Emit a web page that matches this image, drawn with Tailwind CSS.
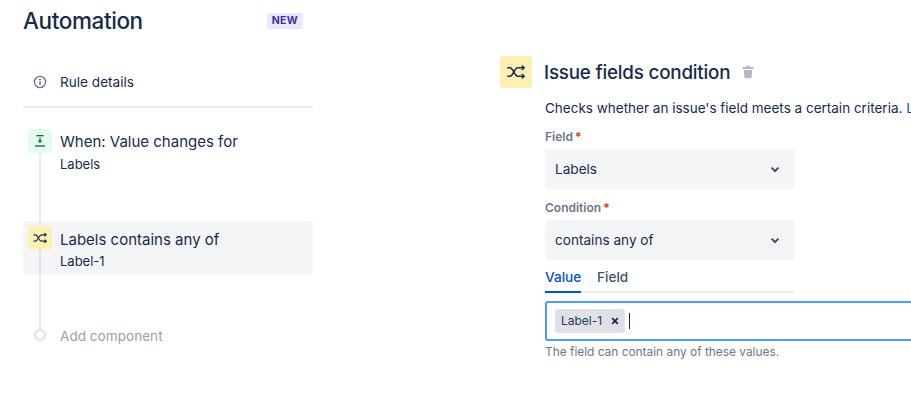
<!DOCTYPE html>
<html lang="en">
<head>
  <meta charset="UTF-8">
  <title>Automation</title>
  <script src="https://cdn.jsdelivr.net/npm/@tailwindcss/browser@4"></script>
</head>
<body class="bg-white h-[400px] w-[911px] overflow-hidden font-['Inter',sans-serif] text-[#172b4d]">
  <div class="flex h-[400px]">
    <!-- sidebar -->
    <aside class="w-[290px] ml-[23px] shrink-0">
      <div class="flex items-center justify-between h-[42px] pr-[10px]">
        <h1 class="text-[22.5px] leading-[42px] font-medium tracking-[-0.4px]">Automation</h1>
        <span class="bg-[#eae6ff] text-[#403294] text-[10.5px] leading-[16px] font-bold px-[5px] rounded-[3px] tracking-[0.3px]">NEW</span>
      </div>
      <div class="flex items-center h-[66px] border-b-2 border-[#ebecf0] pl-[9px] pt-[18px] pb-[2px]">
        <svg class="w-[16px] h-[16px] mr-[12px]" viewBox="0 0 16 16" fill="none">
          <circle cx="8" cy="8" r="5.6" stroke="#6b778c" stroke-width="1.4"/>
          <rect x="7.2" y="7.2" width="1.6" height="3.8" fill="#6b778c"/>
          <circle cx="8" cy="5.4" r="0.95" fill="#6b778c"/>
        </svg>
        <span class="text-[13.6px]">Rule details</span>
      </div>
      <div class="relative">
        <div class="absolute left-[16px] top-[45px] w-[2px] h-[177px] bg-[#ebecf0]"></div>
        <div class="relative flex pl-[5px] pt-[21px] h-[113px]">
          <div class="w-[24px] h-[24px] rounded-[3px] bg-[#e3fcef] flex items-center justify-center mr-[8px] shrink-0">
            <svg class="w-[14px] h-[14px]" viewBox="0 0 14 14" fill="#006644">
              <rect x="3.5" y="1" width="7" height="1.3"/>
              <rect x="6.4" y="3.6" width="1.2" height="3"/>
              <path d="M4.6 6.4h4.8L7 9.2z"/>
              <rect x="2" y="11.4" width="10" height="1.3"/>
            </svg>
          </div>
          <div>
            <div class="text-[15px] leading-[24px] mt-[1px]">When: Value changes for</div>
            <div class="text-[13px] leading-[20px]">Labels</div>
          </div>
        </div>
        <div class="relative flex h-[53px] bg-[#091e42]/[0.045] rounded-[4px] pl-[5px] pt-[5px]">
          <div class="w-[24px] h-[24px] rounded-[3px] bg-[#fff0b3] flex items-center justify-center mr-[8px] shrink-0">
            <svg class="w-[16px] h-[16px]" viewBox="0 0 16 16" fill="none" stroke="#172b4d" stroke-width="1.2">
              <path d="M1.5 4.8h2c2.6 0 3.2 6.4 6 6.4H14"/>
              <path d="M1.5 11.2h2c2.6 0 3.2-6.4 6-6.4H14"/>
              <path d="M12.4 3.2l1.8 1.6-1.8 1.6M12.4 9.6l1.8 1.6-1.8 1.6"/>
            </svg>
          </div>
          <div>
            <div class="text-[15px] leading-[24px] mt-[2px]">Labels contains any of</div>
            <div class="text-[13px] leading-[20px] -mt-[1px]">Label-1</div>
          </div>
        </div>
        <div class="relative flex items-center pl-[11px] mt-[49px] h-[24px]">
          <div class="w-[12px] h-[12px] rounded-full border-2 border-[#dfe1e6] bg-white mr-[14px] -mt-[1px]"></div>
          <span class="text-[13.6px] text-[#97a0af] mt-[2px]">Add component</span>
        </div>
      </div>
    </aside>

    <!-- condition panel -->
    <main class="ml-[187px] pt-[56px] w-[520px] shrink-0">
      <div class="flex items-center h-[32px]">
        <div class="w-[32px] h-[32px] rounded-[3px] bg-[#fff0b3] flex items-center justify-center mr-[12px] shrink-0">
          <svg class="w-[20px] h-[20px]" viewBox="0 0 20 20" fill="none" stroke="#172b4d" stroke-width="1.6">
            <path d="M1.2 5.8h2.8c3.4 0 4.2 8.4 7.8 8.4h6"/>
            <path d="M1.2 14.2h2.8c3.4 0 4.2-8.4 7.8-8.4h6"/>
            <path d="M15.8 3.6l2.4 2.2-2.4 2.2M15.8 12l2.4 2.2-2.4 2.2" stroke-width="1.4"/>
          </svg>
        </div>
        <h2 class="text-[18.8px] font-medium tracking-[-0.2px] mt-[2px]">Issue fields condition</h2>
        <svg class="w-[14px] h-[14px] ml-[11px]" viewBox="0 0 14 14" fill="#b3bac5">
          <rect x="1.5" y="2" width="11" height="2" rx="0.5"/>
          <rect x="5" y="0.8" width="4" height="2"/>
          <path d="M2.6 5h8.8l-.9 7.4a1 1 0 0 1-1 .9H4.5a1 1 0 0 1-1-.9z"/>
        </svg>
      </div>
      <div class="pl-[45px]">
        <p class="text-[13.5px] leading-[20px] mt-[10px] whitespace-nowrap">Checks whether an issue's field meets a certain criteria. <span class="text-[#0052cc]">Learn more</span></p>
        <div class="text-[12px] leading-[16px] font-semibold text-[#6b778c] mt-[11px]">Field<span class="text-[#de350b] ml-[2px]">*</span></div>
        <div class="flex items-center justify-between w-[250px] h-[40px] bg-[#f4f5f7] rounded-[3px] px-[10px] mt-[4px] text-[13.6px]">
          <span>Labels</span>
          <svg class="w-[20px] h-[20px]" viewBox="0 0 20 20" fill="none" stroke="#42526e" stroke-width="2"><path d="M6.5 8.6l3.5 3.4 3.5-3.4"/></svg>
        </div>
        <div class="text-[12px] leading-[16px] font-semibold text-[#6b778c] mt-[11px]">Condition<span class="text-[#de350b] ml-[2px]">*</span></div>
        <div class="flex items-center justify-between w-[250px] h-[40px] bg-[#f4f5f7] rounded-[3px] px-[10px] mt-[4px] text-[13.6px]">
          <span>contains any of</span>
          <svg class="w-[20px] h-[20px]" viewBox="0 0 20 20" fill="none" stroke="#42526e" stroke-width="2"><path d="M6.5 8.6l3.5 3.4 3.5-3.4"/></svg>
        </div>
        <div class="flex w-[249px] h-[33px] border-b-2 border-[#ebecf0] text-[13.6px] font-medium">
          <div class="h-[33px] w-[36px] border-b-2 border-[#0052cc] text-[#0052cc] leading-[34px]">Value</div>
          <div class="ml-[16px] text-[#42526e] leading-[34px]">Field</div>
        </div>
        <div class="flex items-center h-[40px] w-[500px] border-2 border-[#4c9aff] rounded-[3px] mt-[8px] pl-[8px]">
          <div class="flex items-center h-[24px] w-[70px] bg-[#dfe1e6] rounded-[3px] pl-[6px] text-[12px] text-[#253858]">
            <span>Label-1</span>
            <svg class="w-[8px] h-[8px] ml-[9px]" viewBox="0 0 8 8" stroke="#172b4d" stroke-width="1.7"><path d="M1.2 1.2l5.6 5.6M6.8 1.2L1.2 6.8"/></svg>
          </div>
          <div class="w-px h-[16px] bg-[#172b4d] ml-[4px]"></div>
        </div>
        <p class="text-[11.9px] leading-[16px] text-[#6b778c] mt-[3px]">The field can contain any of these values.</p>
      </div>
    </main>
  </div>
</body>
</html>
